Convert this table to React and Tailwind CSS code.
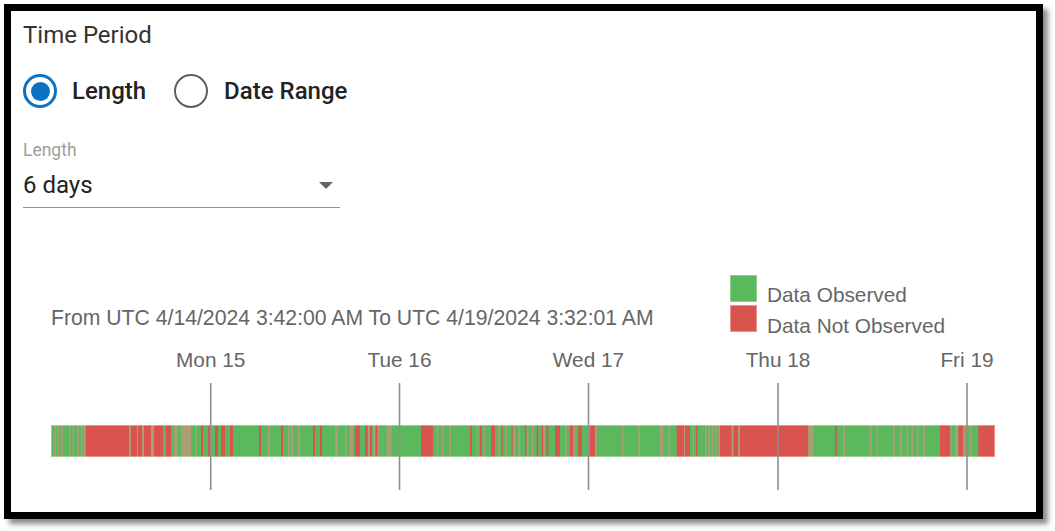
import React from "react";

const RED = [
  [86, 129], [131, 137], [138, 142], [144, 151], [154, 163], [166, 171], [201, 203], [208, 211],
  [215, 218], [221, 225], [230, 233], [259, 261], [281, 283], [313, 315], [320, 322], [355, 360],
  [365, 367.7], [370, 372], [375.7, 377.7], [421, 433], [470, 471.7], [480, 481.7], [491, 495],
  [501.7, 502.7], [511.7, 512.7], [525, 526.7], [536.7, 538.3], [541.7, 543.3], [546.7, 548.3],
  [555, 560], [570, 573.3], [578.3, 581.7], [590, 595], [676.7, 680], [680, 684], [685, 690],
  [696, 697.3], [720, 731.7], [733.3, 738.3], [740, 808.3], [835, 836.7], [940, 950],
  [958.3, 963.3], [978.3, 995],
];

const TAN = [
  [54.2, 55.7], [57.5, 59], [61.5, 63], [69.2, 70.7], [72.5, 74], [77.5, 79], [80.8, 82.3], [83.5, 85],
  [129, 131], [137, 138], [142, 144], [151, 154], [174, 178], [181, 191], [195, 196.5], [268, 270],
  [288, 290], [291, 293], [298, 300], [335, 338], [345, 346.5], [350, 353], [368, 370], [373, 375],
  [377.7, 379], [386.7, 391.7], [436.7, 438.3], [441.7, 443.3], [449.5, 451], [476.7, 478.3],
  [483.3, 485], [498.3, 500], [505, 506.7], [513.3, 515], [518.3, 520], [526.7, 528.3],
  [531.7, 533.3], [543.3, 545], [565, 566.7], [573.3, 575], [595, 596.7], [621.7, 623.3],
  [638.3, 640], [660, 663.3], [668.3, 670], [684, 685], [692.7, 694], [705, 706.7], [708.3, 710],
  [711.7, 713.3], [715, 716.7], [718.3, 720], [731.7, 733.3], [738.3, 740], [808.3, 813.3],
  [843.3, 845], [870, 871.7], [876.7, 878.3], [893.3, 895], [900, 901.7], [906.7, 908.3],
  [911.7, 913.3], [916.7, 918.3], [923.3, 925], [950, 951.7], [955, 958.3], [963.3, 965], [970, 971.7],
];

const TICKS = [
  [210.7, "Mon 15"],
  [399.5, "Tue 16"],
  [588.5, "Wed 17"],
  [778, "Thu 18"],
  [967, "Fri 19"],
];

function Chart() {
  const font = "'Liberation Sans', Arial, sans-serif";
  return (
    <svg width="1000" height="240" className="block" style={{ fontFamily: font }}>
      <g transform="translate(-23 -260)">
        <text x="51" y="325" fontSize="21.2" fill="#666">
          From UTC 4/14/2024 3:42:00 AM To UTC 4/19/2024 3:32:01 AM
        </text>
        <rect x="730.5" y="275.5" width="26" height="26" fill="#5cb85c" stroke="#8fd08f" strokeWidth="1" />
        <rect x="730.5" y="305.5" width="26" height="26" fill="#d9534f" stroke="#e8938f" strokeWidth="1" />
        <text x="767" y="302.3" fontSize="20.8" fill="#666">Data Observed</text>
        <text x="767" y="333.3" fontSize="20.8" fill="#666">Data Not Observed</text>
        {TICKS.map(([x, l]) => (
          <text key={l} x={x} y="366.7" fontSize="20.8" fill="#666" textAnchor="middle">
            {l}
          </text>
        ))}
        <rect x="51" y="425" width="944" height="32" fill="#5cb85c" />
        {RED.map(([a, b], i) => (
          <rect key={"r" + i} x={a} y="425" width={b - a} height="32" fill="#d9534f" />
        ))}
        {TAN.map(([a, b], i) => (
          <rect key={"t" + i} x={a} y="425" width={b - a} height="32" fill="#ab9e77" />
        ))}
        <rect x="51.5" y="425.5" width="943" height="31" fill="none" stroke="#ffffff" strokeOpacity="0.35" />
        {TICKS.map(([x, l]) => (
          <line key={"l" + l} x1={x} x2={x} y1="383" y2="490" stroke="#8f8f8f" strokeWidth="1.6" />
        ))}
      </g>
    </svg>
  );
}

export default function App() {
  return (
    <div className="w-[1055px] h-[531px] bg-white pl-[4px] pt-[4px]" style={{ fontFamily: "Roboto, 'Noto Sans', sans-serif" }}>
      <div className="w-[1039px] h-[515px] border-[7px] border-black bg-white shadow-[5px_5px_5px_rgba(0,0,0,0.45)]">
        <div className="pl-[12px] pt-[12px]">
          <div className="h-[24px] leading-[24px] text-[24px] text-[#333]">Time Period</div>
          <div className="mt-[27px] flex items-center h-[34px]">
            <div className="w-[34px] h-[34px] rounded-full border-[3px] border-[#0b73c1] flex items-center justify-center">
              <div className="w-[19px] h-[19px] rounded-full bg-[#0b73c1]" />
            </div>
            <span className="ml-[15px] text-[24px] font-medium text-[#222] leading-[34px]">Length</span>
            <div className="ml-[28px] w-[34px] h-[34px] rounded-full border-[2px] border-[#5f5f5f]" />
            <span className="ml-[16px] text-[24px] font-medium text-[#222] leading-[34px]">Date Range</span>
          </div>
          <div className="mt-[32px] h-[20px] leading-[20px] text-[17.5px] text-[#9e9e9e]">Length</div>
          <div className="w-[317px] pt-[10px] pb-[7px] border-b border-[#949494]">
            <div className="h-[30px] flex items-center justify-between">
              <span className="text-[24px] text-[#222] leading-[30px]">6 days</span>
              <svg width="14" height="7" className="mr-[7px]">
                <polygon points="0,0 14,0 7,7" fill="#666" />
              </svg>
            </div>
          </div>
          <div className="mt-[52px]">
            <Chart />
          </div>
        </div>
      </div>
    </div>
  );
}
